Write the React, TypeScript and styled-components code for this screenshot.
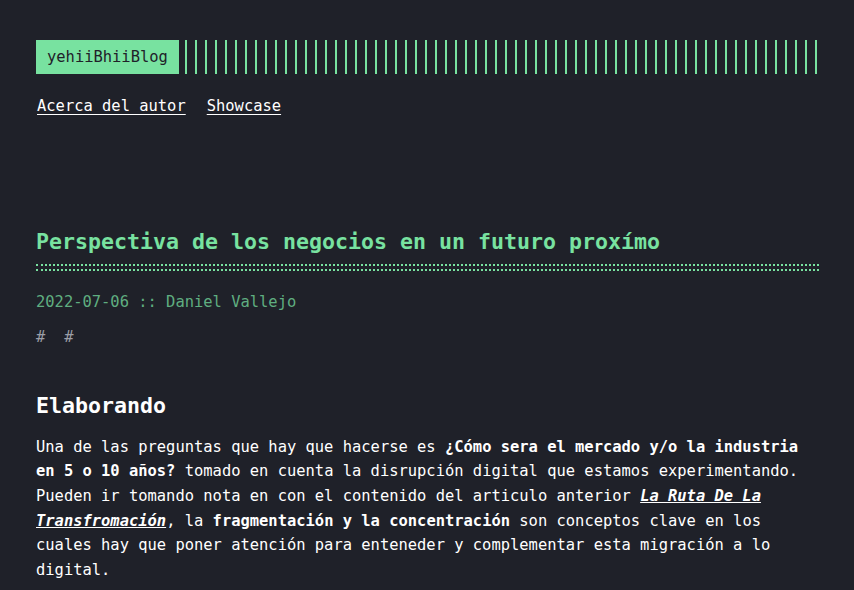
import React from "react";
import styled, { createGlobalStyle } from "styled-components";

const accent = "#78e2a0";
const bg = "#1f2129";

const GlobalStyle = createGlobalStyle`
  html, body {
    margin: 0;
    padding: 0;
    background: ${bg};
  }
  body {
    color: #ffffff;
    font-family: "DejaVu Sans Mono", "Liberation Mono", monospace;
    font-size: 15.45px;
    line-height: 1.6;
  }
`;

const Container = styled.div`
  padding: 40px 35px 0 36px;
  max-width: 783px;
`;

const Header = styled.header`
  display: flex;
  flex-direction: column;
`;

const LogoRow = styled.div`
  display: flex;
  align-items: stretch;
  height: 34px;
`;

const Logo = styled.a`
  display: flex;
  align-items: center;
  padding: 0 11px;
  background: ${accent};
  color: ${bg};
  font-size: 15.45px;
  text-decoration: none;
`;

const Bars = styled.div`
  flex: 1;
  margin-left: 6px;
  background: repeating-linear-gradient(
    90deg,
    ${accent} 0,
    ${accent} 2px,
    transparent 2px,
    transparent 10px
  );
  max-width: 635px;
`;

const Menu = styled.nav`
  display: flex;
  gap: 21px;
  margin-top: 20px;
  padding-left: 1px;
`;

const MenuLink = styled.a`
  color: #ffffff;
  text-decoration: underline;
  text-underline-offset: 3px;
`;

const Post = styled.article`
  margin-top: 108px;
`;

const PostTitle = styled.h1`
  margin: 0;
  color: ${accent};
  font-size: 21.6px;
  font-weight: bold;
  line-height: 1.4;
`;

const DottedRule = styled.div`
  margin-top: 7px;
  height: 3px;
  border-top: 2px dotted ${accent};
  border-bottom: 2px dotted ${accent};
`;

const Meta = styled.div`
  margin-top: 19px;
  color: #5fae80;
`;

const Tags = styled.div`
  display: flex;
  gap: 19px;
  margin-top: 10px;
  color: #9b9ea6;
`;

const SectionTitle = styled.h2`
  margin: 42px 0 0;
  font-size: 21.6px;
  font-weight: bold;
  line-height: 1.4;
`;

const Paragraph = styled.p`
  margin: 13px 0 0;
`;

const ArticleLink = styled.a`
  color: #ffffff;
  font-weight: bold;
  font-style: italic;
  text-decoration: underline;
`;

export default function App() {
  return (
    <>
      <GlobalStyle />
      <Container>
        <Header>
          <LogoRow>
            <Logo href="#">yehiiBhiiBlog</Logo>
            <Bars />
          </LogoRow>
          <Menu>
            <MenuLink href="#">Acerca del autor</MenuLink>
            <MenuLink href="#">Showcase</MenuLink>
          </Menu>
        </Header>
        <Post>
          <PostTitle>Perspectiva de los negocios en un futuro proxímo</PostTitle>
          <DottedRule />
          <Meta>2022-07-06 :: Daniel Vallejo</Meta>
          <Tags>
            <span>#</span>
            <span>#</span>
          </Tags>
          <SectionTitle>Elaborando</SectionTitle>
          <Paragraph>
            Una de las preguntas que hay que hacerse es{" "}
            <strong>¿Cómo sera el mercado y/o la industria en 5 o 10 años?</strong>{" "}
            tomado en cuenta la disrupción digital que estamos experimentando.
            Pueden ir tomando nota en con el contenido del articulo anterior{" "}
            <ArticleLink href="#">La Ruta De La Transfromación</ArticleLink>, la{" "}
            <strong>fragmentación y la concentración</strong> son conceptos clave
            en los cuales hay que poner atención para enteneder y complementar
            esta migración a lo digital.
          </Paragraph>
        </Post>
      </Container>
    </>
  );
}
